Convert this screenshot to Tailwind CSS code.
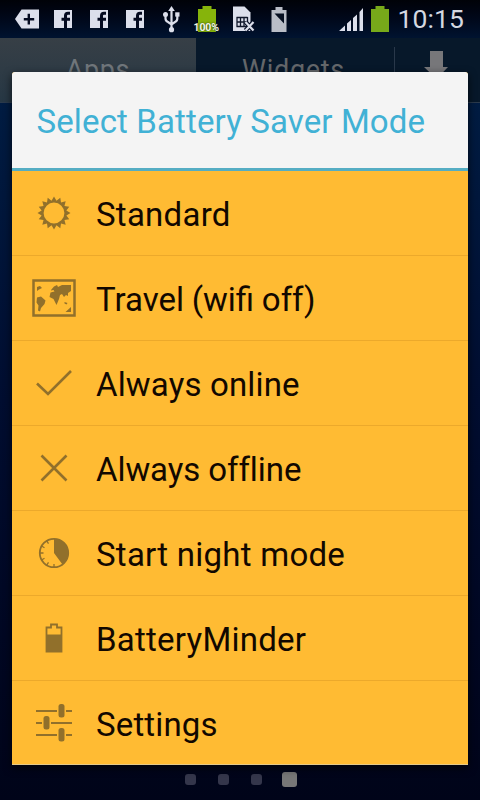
<!DOCTYPE html>
<html lang="en">
<head>
<meta charset="utf-8">
<title>Select Battery Saver Mode</title>
<script src="https://cdn.jsdelivr.net/npm/@tailwindcss/browser@4"></script>
</head>
<body class="w-[480px] h-[800px] overflow-hidden bg-[#00061c] font-['Roboto',sans-serif]">
<div class="relative w-[480px] h-[800px] overflow-hidden flex flex-col bg-linear-to-b from-[#001c42] from-12% via-[#000d30] via-50% to-[#000419]">
  <header class="h-[38px] shrink-0 bg-linear-to-b from-[#000208] to-[#001330]">
    <svg class="block" width="480" height="38" viewBox="0 0 480 38" fill="#dcdfeb">
      <path d="M15 19 21.500 9.500H39V28.500H21.500Z"/>
      <path d="M28.800 13.800v10.800M23.800 19.200h10.400" stroke="#050b20" stroke-width="2.400"/>
      <g>
        <path d="M54 10h18v18H54z"/>
        <path d="M70 13.300h-2q-2.500 0-2.500 2.500V28M61.500 19.200h8.500" fill="none" stroke="#050b20" stroke-width="3"/>
        <path d="M90 10h18v18H90z"/>
        <path d="M106 13.300h-2q-2.500 0-2.500 2.500V28M97.500 19.200h8.500" fill="none" stroke="#050b20" stroke-width="3"/>
        <path d="M126 10h18v18h-18z"/>
        <path d="M142 13.300h-2q-2.500 0-2.500 2.500V28M133.500 19.200h8.500" fill="none" stroke="#050b20" stroke-width="3"/>
      </g>
      <path d="M171.500 6 174.800 11h-6.600z"/>
      <circle cx="171.500" cy="29.700" r="2.600"/><circle cx="165.500" cy="14.500" r="2.500"/><path d="M175.200 12.300h4.300v4.300h-4.300z"/>
      <path d="M171.500 10v19M165.500 14v4.500q0 2.500 2.500 3.500l3.500 2.500 3.500-2.500q2.300-1 2.300-3.500V15" fill="none" stroke="#dcdfeb" stroke-width="2.200"/>
      <path d="M202.500 6h9v3h4.500v23h-18V9h4.500z" fill="#86b40b"/>
      <path d="M233 6.500h11.500l6 6V31H233z"/>
      <path d="M236.500 17.500h11M236.500 22h11M236.500 26.500h11M237 17v10M240.500 17v10M244 17v10M247.500 17v10" stroke="#10172b" stroke-width="1.300"/>
      <path d="M245.500 22l8 8.500m0-8.500-8 8.500" stroke="#081027" stroke-width="4.500"/>
      <path d="M245.500 22l8 8.500m0-8.500-8 8.500" stroke="#dcdfeb" stroke-width="2.200"/>
      <path d="M275.500 7h7v3h4v22h-15V10h4z" fill="#b9bdc7"/>
      <path d="M274.500 13.500h9.500v10z" fill="#071022"/>
      <path d="M339 31l6-5.500V31zM347 23.500l4-3.500v11h-4zM353 18l4-3.500V31h-4zM359.500 12l3.500-4v23h-3.500z"/>
      <path d="M375.500 6h9v3h4.500v23h-18V9h4.500z" fill="#77a91a"/>
      <text x="397.500" y="27.700" font-size="26.500" textLength="66.500" fill="#d5d8e1">10:15</text>
    </svg>
    <span class="absolute left-[193.500px] top-[21px] text-[10.500px] leading-[13px] font-bold text-[#f2f6e8] tracking-[-0.100px] [text-shadow:0_0_2px_#18220a]">100%</span>
  </header>

  <nav class="h-[65px] shrink-0 flex text-[27px] leading-[64px] text-[#64676a] bg-[#07182a] border-b border-[#2b3a4c]">
    <div class="w-[196px] text-center bg-linear-to-b from-[#373f46] to-[#263744] text-[#70767b] tracking-[0.600px]">Apps</div>
    <div class="w-[198px] text-center tracking-[0.700px] pr-[3px]">Widgets</div>
    <div class="w-px h-[46px] mt-[9px] bg-[#29384a]"></div>
    <svg class="ml-[28px] mt-[13px]" width="26" height="30" viewBox="0 0 26 30" fill="#77777a"><path d="M7 0h13v16h5L13.500 28 1 16h6z"/></svg>
  </nav>

  <div class="mt-auto mb-[13px] ml-[185px] flex items-center h-[15px]">
    <span class="w-[11px] h-[11px] rounded-[3px] bg-[#34364b]"></span>
    <span class="ml-[22px] w-[11px] h-[11px] rounded-[3px] bg-[#34364b]"></span>
    <span class="ml-[22px] w-[11px] h-[11px] rounded-[3px] bg-[#34364b]"></span>
    <span class="ml-[20px] w-[15px] h-[15px] rounded-[3px] bg-[#777777]"></span>
  </div>

  <main class="absolute left-[12px] top-[72px] w-[456px] h-[693px] rounded-t-[3px] overflow-hidden bg-[#ffbb33] shadow-[0_3px_8px_0px_rgba(0,0,0,0.7)]">
    <h1 class="h-[99px] bg-[#f4f4f4] border-b-[3px] border-[#55adc3] pl-[24.500px] text-[33px] leading-[99px] whitespace-nowrap text-[#41b1d5] tracking-[0.130px]">Select Battery Saver Mode</h1>
    <ul class="text-[33px] leading-[88px] text-[#120800] whitespace-nowrap">
      <li class="h-[85px] border-b border-[#eca92b] flex">
        <svg class="w-[84px] h-[84px] shrink-0" viewBox="12 171 84 84" fill="#91702b"><path id="sun" fill-rule="evenodd"/></svg><span class="tracking-[0.250px]">Standard</span>
      </li>
      <li class="h-[85px] border-b border-[#eca92b] flex">
        <svg class="w-[84px] h-[84px] shrink-0" viewBox="12 256 84 84" fill="#91702b">
          <path d="M33.500 280.500h41v35h-41z" fill="none" stroke="#91702b" stroke-width="2.500"/>
          <path d="M37 287l3-1 2 2-3 1.500-2 1.500zM37 297.500l4-1 4.500 4-1 3.500-3.500 4-1 3.500-2-1 .5-5-2-3zM51 290l3-3.500 3-1.500 1 2 4-2h9v6l-3 2v3l-2-1-2 2-2-3-2 1-1 4-2.500 6-3-6-4-2 1-4.500 4-1-1-1.500-2.500.5zM64.500 302l3 1-1 1.500-2-1zM65.500 312l5.500-5v5z"/>
        </svg><span class="[word-spacing:-0.500px]">Travel (wifi off)</span>
      </li>
      <li class="h-[85px] border-b border-[#eca92b] flex">
        <svg class="w-[84px] h-[84px] shrink-0" viewBox="12 341 84 84" fill="none" stroke="#91702b" stroke-width="2.600"><path d="M37 383.500 48 394 71 371"/></svg><span class="tracking-[0.150px]">Always online</span>
      </li>
      <li class="h-[85px] border-b border-[#eca92b] flex">
        <svg class="w-[84px] h-[84px] shrink-0" viewBox="12 426 84 84" fill="none" stroke="#91702b" stroke-width="2.600"><path d="M41.500 455.500l25 25m0-25-25 25"/></svg><span class="tracking-[-0.080px]">Always offline</span>
      </li>
      <li class="h-[85px] border-b border-[#eca92b] flex">
        <svg class="w-[84px] h-[84px] shrink-0" viewBox="12 511 84 84" fill="#91702b">
          <circle cx="54" cy="553" r="14.200" fill="none" stroke="#91702b" stroke-width="1.800"/>
          <path d="M54 553V539A14 14 0 0 1 62.500 564.500Z"/>
          <path d="M54 564v3M40 553h3.500M46.500 540.500l2 3.200M41.500 546l3 1.700M41.500 560l3-1.700M46.500 565.500l2-3.200" stroke="#91702b" stroke-width="1.300"/>
        </svg><span class="tracking-[0.250px]">Start night mode</span>
      </li>
      <li class="h-[85px] border-b border-[#eca92b] flex">
        <svg class="w-[84px] h-[84px] shrink-0" viewBox="12 596 84 84" fill="#91702b">
          <path d="M46.500 651.500v-24h4.500v-3h6v3h4.500v24z" fill="none" stroke="#91702b" stroke-width="1.800"/>
          <path d="M46 634.500h16V652H46z"/>
        </svg><span class="tracking-[0.250px]">BatteryMinder</span>
      </li>
      <li class="h-[84px] flex">
        <svg class="w-[84px] h-[84px] shrink-0" viewBox="12 681 84 84" fill="#91702b">
          <path d="M36 710h21v2H36zM66 710h6v2h-6zM36 722h6v2h-6zM51 722h21v2H51zM36 734h21v2H36zM66 734h6v2h-6z"/>
          <rect x="58.500" y="704" width="6" height="13.500" rx="2.500"/><rect x="43.500" y="716" width="6" height="13.500" rx="2.500"/><rect x="58.500" y="728" width="6" height="13.500" rx="2.500"/>
        </svg><span class="tracking-[0.150px]">Settings</span>
      </li>
    </ul>
    <div class="absolute bottom-0 left-0 w-full h-px bg-[#e4c98a]"></div>
  </main>
</div>
<script>
  // Toothed ring: 16 points around an open disc.
  let d = '';
  for (let i = 0; i < 32; i++) {
    const a = (i * 11.25 - 90) * Math.PI / 180, r = i % 2 ? 12.6 : 16.5;
    d += (i ? 'L' : 'M') + (54 + r * Math.cos(a)).toFixed(2) + ' ' + (213 + r * Math.sin(a)).toFixed(2);
  }
  document.getElementById('sun').setAttribute('d', d + 'ZM64.400 213a10.400 10.400 0 1 0-20.800 0a10.400 10.400 0 1 0 20.800 0Z');
</script>
</body>
</html>
